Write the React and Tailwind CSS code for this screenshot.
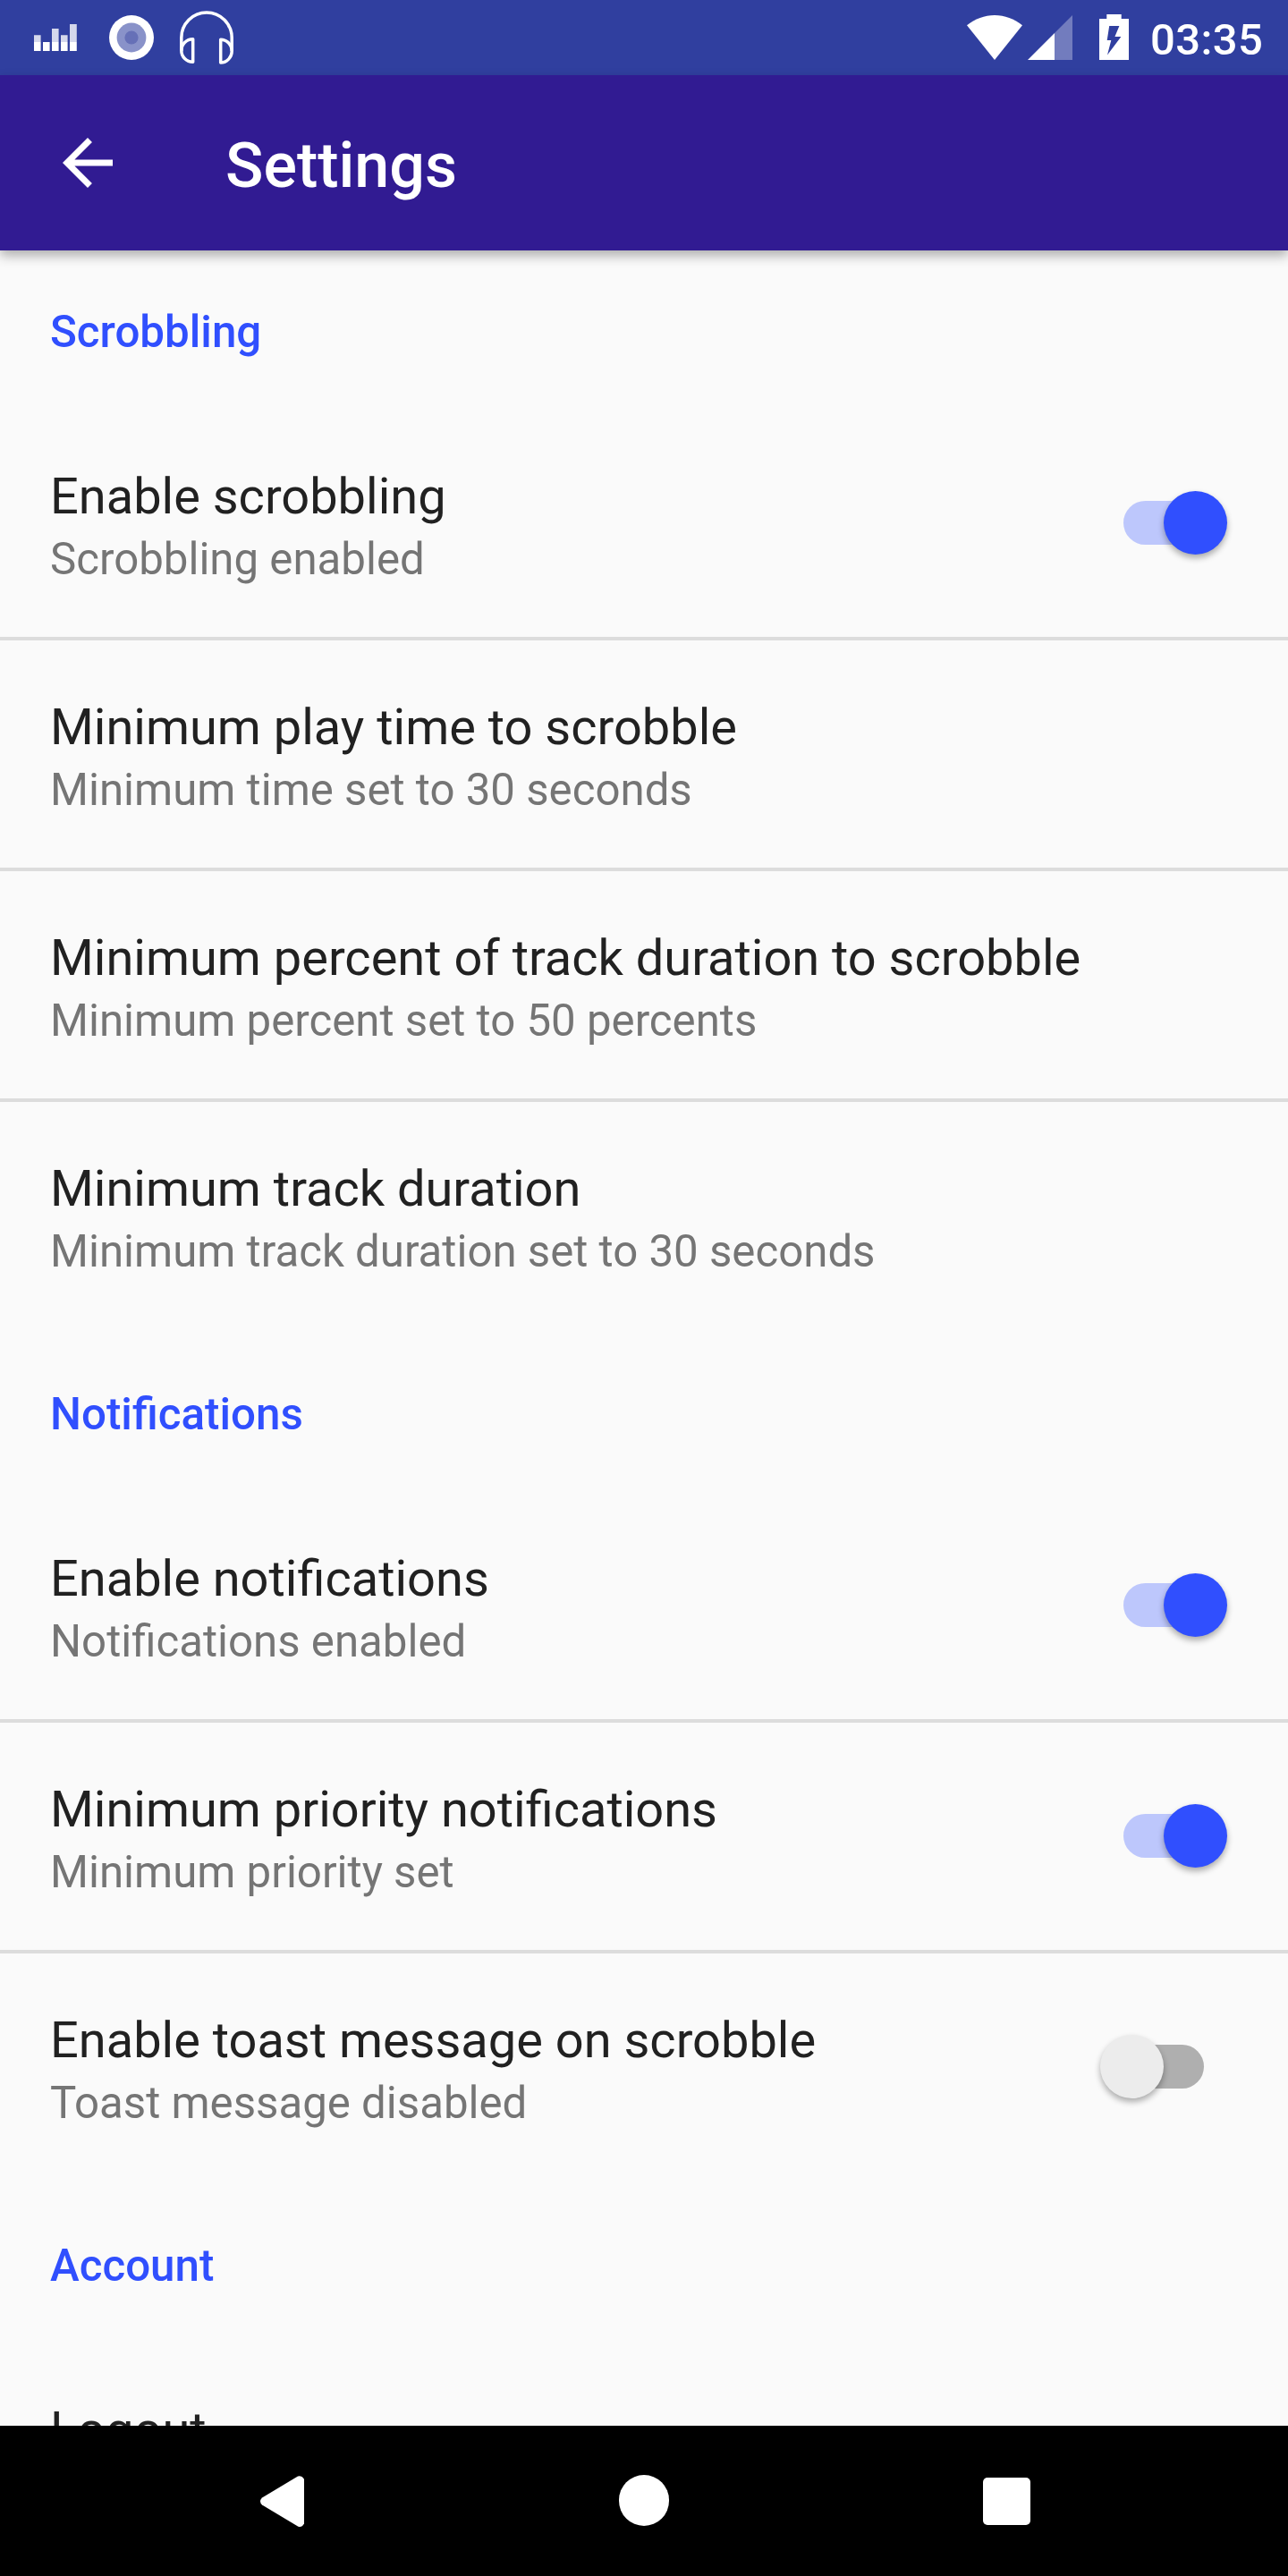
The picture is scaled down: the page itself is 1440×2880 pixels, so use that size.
const sections = [
  {
    title: "Scrobbling",
    items: [
      { title: "Enable scrobbling", summary: "Scrobbling enabled", on: true },
      { title: "Minimum play time to scrobble", summary: "Minimum time set to 30 seconds" },
      { title: "Minimum percent of track duration to scrobble", summary: "Minimum percent set to 50 percents" },
      { title: "Minimum track duration", summary: "Minimum track duration set to 30 seconds" },
    ],
  },
  {
    title: "Notifications",
    items: [
      { title: "Enable notifications", summary: "Notifications enabled", on: true },
      { title: "Minimum priority notifications", summary: "Minimum priority set", on: true },
      { title: "Enable toast message on scrobble", summary: "Toast message disabled", on: false },
    ],
  },
  {
    title: "Account",
    items: [{ title: "Logout", summary: "" }],
  },
];

function StatusBar() {
  return (
    <div className="flex h-[84px] shrink-0 items-start justify-between bg-[#303f9f] text-white">
      <div className="flex">
        <svg className="ml-[38px] h-[84px] w-[48px]" viewBox="38 0 48 84" fill="#fff">
          <g fillOpacity="0.8">
            <path d="M38 39.3h7.6V47H38zM58 32h7.6v15H58zM68 39.3h7.6V47H68zM78 27h7.8v20H78z" />
          </g>
          <path d="M38 47h7.6v10H38zM48 47h7.6v10H48zM58 47h7.6v10H58zM68 47h7.6v10H68zM78 47h7.8v10H78z" />
        </svg>
        <svg className="ml-[36px] h-[84px] w-[50px]" viewBox="122 0 50 84">
          <circle cx="147" cy="42" r="25" fill="#fff" />
          <circle cx="147" cy="42" r="16.4" fill="#8992c9" />
          <circle cx="147" cy="42" r="7.6" fill="#6670b7" />
        </svg>
        <svg className="ml-[28px] h-[84px] w-[64px]" viewBox="200 0 64 84" fill="none" stroke="#fff" strokeWidth="3.5">
          <path d="M202.8 57V42.3a28.2 28.2 0 0 1 56.4 0V57" />
          <path d="M215.7 43.8v25.5c-7.3 0-12.9-5.6-12.9-12.7s5.6-12.8 12.9-12.8z" strokeLinejoin="round" />
          <path d="M246.7 44.2v25.8c7 0 12.5-6 12.5-12.9s-5.5-12.9-12.5-12.9z" strokeLinejoin="round" />
        </svg>
      </div>
      <div className="flex">
        <svg className="h-[84px] w-[62px]" viewBox="1081 0 62 84" fill="#fff">
          <path d="M1112 67l-31-38.7c9-7.3 19.8-11.3 31-11.3s22 4 31 11.3z" />
        </svg>
        <svg className="ml-[6px] h-[84px] w-[50px]" viewBox="1149 0 50 84" fill="#fff">
          <path fillOpacity="0.32" d="M1179 37l20-20v50h-20z" />
          <path d="M1149 67l30-30v30z" />
        </svg>
        <svg className="ml-[30px] h-[84px] w-[33px]" viewBox="1229 0 33 84">
          <path fill="#fff" d="M1229 21h8.3v-5h16.4v5h8.3v46h-33z" />
          <path fill="#303f9f" d="M1240.2 29h11.2l-5 12h7L1238 61.6l4.3-16.6h-4.6z" />
        </svg>
        <span className="mt-[16px] mr-[28px] ml-[24px] w-[126px] text-[49px] leading-[58px] font-medium tracking-[0.4px] whitespace-nowrap">03:35</span>
      </div>
    </div>
  );
}

function AppBar() {
  return (
    <header className="z-10 flex h-[196px] shrink-0 items-center bg-[#311b92] pl-[56px] text-white shadow-[0_6px_12px_rgba(0,0,0,0.3)]">
      <svg className="size-[84px]" viewBox="0 0 24 24" fill="currentColor">
        <path d="M20 11H7.83l5.59-5.59L12 4l-8 8 8 8 1.41-1.41L7.83 13H20v-2z" />
      </svg>
      <h1 className="mt-[5px] ml-[112px] text-[70px] leading-[82px] font-medium">Settings</h1>
    </header>
  );
}

function Switch({ on }) {
  return (
    <div className="mt-[91px] mr-[94px] flex h-[71px] items-center">
      <div className={`flex h-[49px] w-[90px] items-center rounded-full ${on ? "justify-end bg-[#bdc7fc]" : "justify-start bg-[#afafaf]"}`}>
        <div
          className={`size-[71px] shrink-0 rounded-full shadow-[0_4px_7px_rgba(0,0,0,0.32)] ${
            on ? "-mr-[26px] bg-[#304ffe]" : "-ml-[26px] bg-[#ececec]"
          }`}
        />
      </div>
    </div>
  );
}

function Item({ item, divider }) {
  return (
    <div className={`flex h-[258px] shrink-0 items-start justify-between border-b-4 pl-[56px] ${divider ? "border-[#dcdcdc]" : "border-transparent"}`}>
      <div className="pt-[64px] whitespace-nowrap">
        <div className="text-[55.96px] leading-[66px] text-[#212121]">{item.title}</div>
        <div className="mt-[8px] text-[49.2px] leading-[58px] text-[#757575]">{item.summary}</div>
      </div>
      {item.on !== undefined && <Switch on={item.on} />}
    </div>
  );
}

function NavBar() {
  return (
    <nav className="flex h-[168px] shrink-0 bg-black">
      <svg className="ml-[291px] h-[168px] w-[49px]" viewBox="0 0 49 168">
        <path fill="#fff" d="M2 80.5L42 56.6Q46 55 49 59.5V109.5Q46 114.5 42 112.4L2 88.5Q-2 84.5 2 80.5z" />
      </svg>
      <div className="mt-[55px] ml-[351.5px] h-[57px] w-[56px] rounded-full bg-white" />
      <div className="mt-[58px] ml-[351.5px] h-[53px] w-[53px] rounded-[5px] bg-white" />
    </nav>
  );
}

export default function App() {
  return (
    <div className="flex h-[2880px] w-[1440px] flex-col overflow-hidden bg-[#fafafa] font-['Roboto',sans-serif]">
      <StatusBar />
      <AppBar />
      <main className="flex min-h-0 flex-1 flex-col overflow-hidden">
        {sections.map((section) => (
          <section key={section.title} className="shrink-0">
            <h2 className="h-[178px] pt-[62px] pl-[56px] text-[49.3px] leading-[58px] font-medium text-[#304ffe]">{section.title}</h2>
            {section.items.map((item, i) => (
              <Item key={item.title} item={item} divider={i < section.items.length - 1} />
            ))}
          </section>
        ))}
      </main>
      <NavBar />
    </div>
  );
}
